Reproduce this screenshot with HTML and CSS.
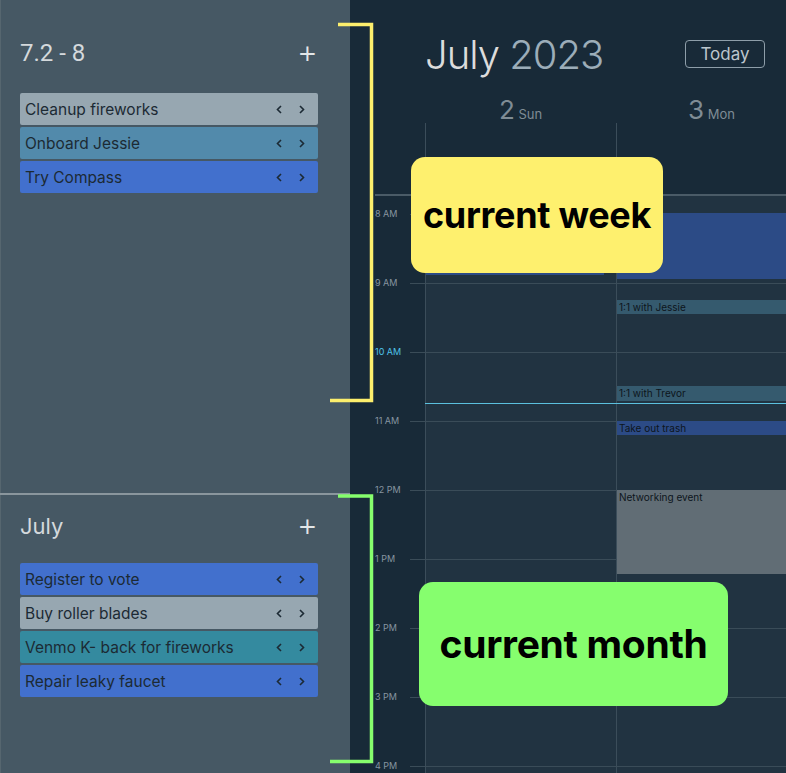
FILE: index.html
```html
<!DOCTYPE html>
<html lang="en">
<head>
  <meta charset="UTF-8">
  <meta name="viewport" content="width=device-width, initial-scale=1">
  <title>Planner</title>
<link rel="stylesheet" href="styles.css">
</head>
<body>
<div class="app">
  <aside class="sidebar">
    <section class="period week">
      <div class="period-head">
        <h2 class="range">7.2 - 8</h2>
        <button class="add">+</button>
      </div>
      <ul class="tasks">
        <li class="task gray"><span>Cleanup fireworks</span><span class="moves"><svg width="6" height="9" viewBox="0 0 6 9"><path d="M5 1 L1.5 4.5 L5 8"/></svg><svg width="6" height="9" viewBox="0 0 6 9"><path d="M1 1 L4.5 4.5 L1 8"/></svg></span></li>
        <li class="task steel"><span>Onboard Jessie</span><span class="moves"><svg width="6" height="9" viewBox="0 0 6 9"><path d="M5 1 L1.5 4.5 L5 8"/></svg><svg width="6" height="9" viewBox="0 0 6 9"><path d="M1 1 L4.5 4.5 L1 8"/></svg></span></li>
        <li class="task blue"><span>Try Compass</span><span class="moves"><svg width="6" height="9" viewBox="0 0 6 9"><path d="M5 1 L1.5 4.5 L5 8"/></svg><svg width="6" height="9" viewBox="0 0 6 9"><path d="M1 1 L4.5 4.5 L1 8"/></svg></span></li>
      </ul>
    </section>
    <section class="period month">
      <div class="period-head">
        <h2 class="monthname">July</h2>
        <button class="add">+</button>
      </div>
      <ul class="tasks">
        <li class="task blue"><span>Register to vote</span><span class="moves"><svg width="6" height="9" viewBox="0 0 6 9"><path d="M5 1 L1.5 4.5 L5 8"/></svg><svg width="6" height="9" viewBox="0 0 6 9"><path d="M1 1 L4.5 4.5 L1 8"/></svg></span></li>
        <li class="task gray"><span>Buy roller blades</span><span class="moves"><svg width="6" height="9" viewBox="0 0 6 9"><path d="M5 1 L1.5 4.5 L5 8"/></svg><svg width="6" height="9" viewBox="0 0 6 9"><path d="M1 1 L4.5 4.5 L1 8"/></svg></span></li>
        <li class="task teal"><span>Venmo K- back for fireworks</span><span class="moves"><svg width="6" height="9" viewBox="0 0 6 9"><path d="M5 1 L1.5 4.5 L5 8"/></svg><svg width="6" height="9" viewBox="0 0 6 9"><path d="M1 1 L4.5 4.5 L1 8"/></svg></span></li>
        <li class="task blue"><span>Repair leaky faucet</span><span class="moves"><svg width="6" height="9" viewBox="0 0 6 9"><path d="M5 1 L1.5 4.5 L5 8"/></svg><svg width="6" height="9" viewBox="0 0 6 9"><path d="M1 1 L4.5 4.5 L1 8"/></svg></span></li>
      </ul>
    </section>
  </aside>

  <main class="calendar">
    <header class="cal-head">
      <h1 class="title"><span class="m">July</span> <span class="y">2023</span></h1>
      <button class="today">Today</button>
    </header>
    <div class="days">
      <div class="gutter"></div>
      <div class="day"><b>2</b> Sun</div>
      <div class="day"><b>3</b> Mon</div>
    </div>
    <div class="allday">
      <div class="gutter"></div>
      <div class="col"></div>
      <div class="col"></div>
    </div>
    <div class="allday-line"></div>
    <div class="grid">
      <div class="hours">
        <div class="hour">8 AM</div>
        <div class="hour">9 AM</div>
        <div class="hour now">10 AM</div>
        <div class="hour">11 AM</div>
        <div class="hour">12 PM</div>
        <div class="hour">1 PM</div>
        <div class="hour">2 PM</div>
        <div class="hour">3 PM</div>
        <div class="hour">4 PM</div>
      </div>
      <div class="col">
        <div class="event blue short" style="top:17px;height:62px"></div>
      </div>
      <div class="col">
        <div class="event blue" style="top:17px;height:66px"></div>
        <div class="event slate" style="top:104px;height:14px">1:1 with Jessie</div>
        <div class="event slate" style="top:190px;height:15px">1:1 with Trevor</div>
        <div class="event blue" style="top:225px;height:14px">Take out trash</div>
        <div class="event grey" style="top:294px;height:84px">Networking event</div>
      </div>
      <div class="nowline" style="top:207px"></div>
    </div>
  </main>

  <svg class="bracket" width="786" height="773" viewBox="0 0 786 773">
    <path class="yellow" d="M338 24.5 H371.5 V400.5 H330"/>
    <path class="green" d="M338 496 H371.5 V761.5 H330"/>
  </svg>
  <div class="note note-week">current week</div>
  <div class="note note-month">current month</div>
</div>
</body>
</html>
```

FILE: styles.css
```css
*{
  box-sizing: border-box;
}
html, body {
  margin: 0;
  height: 100%;
}
body {
  background: #182a38;
  font-family: "Inter", "Open Sans", sans-serif;
  overflow: hidden;
}
.app {
  position: relative;
  display: flex;
  width: 786px;
  height: 773px;
  overflow: hidden;
}

/* sidebar */
.sidebar {
  width: 350px;
  flex: none;
  background: #465864;
  box-shadow: inset 1px 0 #56666f;
}
.period.week {
  height: 495px;
  padding-top: 39px;
  border-bottom: 2px solid #8a969d;
}
.period.month {
  padding-top: 17px;
}
.period-head {
  display: flex;
  align-items: center;
  justify-content: space-between;
  height: 28px;
  padding: 0 33px 0 20px;
}
.range {
  margin: 0;
  font-family: "Roboto", sans-serif;
  font-weight: 400;
  font-size: 24px;
  color: #d4d9dc;
}
.monthname {
  margin: 0;
  font-weight: 400;
  font-size: 22px;
  color: #d4d9dc;
}
.add {
  background: none;
  border: none;
  padding: 0;
  font-family: "DejaVu Sans", sans-serif;
  font-size: 23px;
  line-height: 1;
  color: #e2e6e8;
}
.tasks {
  list-style: none;
  margin: 26px 0 0 20px;
  padding: 0;
  width: 298px;
  display: flex;
  flex-direction: column;
  gap: 2px;
}
.month .tasks {
  margin-top: 23px;
}
.task {
  display: flex;
  align-items: center;
  justify-content: space-between;
  height: 32px;
  padding: 1px 13px 0 5px;
  border-radius: 2px;
  font-size: 15.5px;
  color: #1c2a34;
}
.task.gray  { background: #97a7b1; }
.task.steel { background: #528aab; }
.task.blue  { background: #4270cd; }
.task.teal  { background: #348a9f; }
.moves {
  display: flex;
  gap: 17px;
}
.moves svg path {
  fill: none;
  stroke: #1c2a34;
  stroke-width: 1.6;
}

/* calendar */
.calendar {
  flex: none;
  width: 457px;
  background: #182a38;
}
.cal-head {
  display: flex;
  align-items: flex-start;
  justify-content: space-between;
  height: 94px;
  padding: 31px 21px 0 75px;
  width: 436px;
}
.title {
  margin: 0;
  font-size: 40px;
  font-weight: 300;
  line-height: 48px;
  letter-spacing: -1px;
}
.title .m { color: #dcdcdc; }
.title .y { color: #9cadb9; }
.today {
  margin-top: 9px;
  width: 80px;
  height: 28px;
  background: none;
  border: 1px solid #8e9ea9;
  border-radius: 4px;
  font-family: inherit;
  font-size: 17px;
  color: #bcc6cd;
}
.days, .allday, .grid {
  display: grid;
  grid-template-columns: 75px 191px 191px;
}
.day {
  height: 29px;
  text-align: center;
  font-size: 13px;
  color: #7f8c95;
}
.day b {
  font-size: 26px;
  font-weight: 400;
}
.allday {
  height: 71px;
}
.col {
  border-left: 1px solid #3b4d5a;
}
.allday-line {
  height: 2px;
  margin-left: 25px;
  background: #4a5b67;
}
.grid {
  position: relative;
  height: 600px;
}
.grid .col {
  position: relative;
  background: #213341 linear-gradient(to bottom, #3a4c58 1px, transparent 1px) 0 18px / 100% 69px repeat-y;
}
.hours {
  padding: 12px 0 0 25px;
  background: linear-gradient(to bottom, #3a4c58 1px, transparent 1px) 60px 18px / 15px 69px repeat-y;
  background-color: #182a38;
}
.hour {
  height: 69px;
  line-height: 12px;
  font-size: 9px;
  color: #8795a0;
}
.hour.now {
  color: #4fc3e8;
}
.event {
  position: absolute;
  left: 0;
  right: 0;
  padding: 1px 2px;
  font-size: 10px;
  line-height: 12px;
  color: #0d151c;
  white-space: nowrap;
}
.event.short { right: 12px; }
.event.blue  { background: #2c4b86; }
.event.slate { background: #355a6e; }
.event.grey  { background: #616d75; }
.nowline {
  position: absolute;
  left: 75px;
  right: 0;
  height: 1px;
  background: #5bc0de;
}

/* annotations */
.bracket {
  position: absolute;
  left: 0;
  top: 0;
  pointer-events: none;
}
.bracket path {
  fill: none;
  stroke-width: 3.5;
}
.bracket .yellow { stroke: #fdef6d; }
.bracket .green  { stroke: #86fe6d; }
.note {
  position: absolute;
  display: flex;
  align-items: center;
  justify-content: center;
  border-radius: 14px;
  font-weight: 700;
  color: #000;
  letter-spacing: -0.3px;
}
.note-week {
  left: 411px;
  top: 157px;
  width: 252px;
  height: 116px;
  background: #fef06e;
  font-size: 36px;
}
.note-month {
  left: 419px;
  top: 582px;
  width: 309px;
  height: 124px;
  background: #86fe6e;
  font-size: 39px;
  padding-bottom: 2px;
}
```
